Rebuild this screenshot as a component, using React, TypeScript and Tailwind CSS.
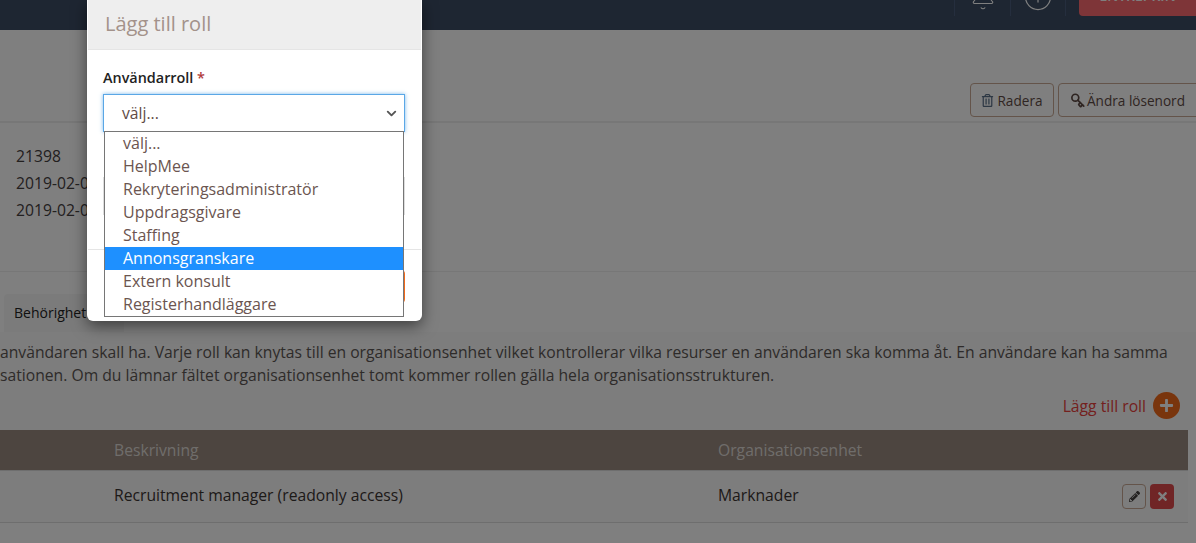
import { Bell, ChevronDown, Info, Key } from "lucide-react"
import { FaPencilAlt, FaPlus, FaRegTrashAlt, FaTimes } from "react-icons/fa"

const options = ["välj...", "HelpMee", "Rekryteringsadministratör", "Uppdragsgivare", "Staffing", "Annonsgranskare", "Extern konsult", "Registerhandläggare"]

const Page = () => {
  return (
    <div className="h-[543px] overflow-hidden bg-white text-[15.7px] leading-[23px] text-[#5f4b45]">
      <div className="h-[30px] bg-[#3c4c64] flex justify-end overflow-hidden">
        <div className="h-[16px] flex border-l border-[#4a5d7c]">
          <div className="w-[55px] flex justify-center items-end text-white">
            <Bell size={26} strokeWidth={1} className="shrink-0 mb-[5px]" />
          </div>
          <div className="w-[55px] flex justify-center items-end border-l border-[#4a5d7c] text-white">
            <Info size={30} strokeWidth={1} className="shrink-0 mb-[4px]" />
          </div>
          <div className="w-[14px] border-l border-[#4a5d7c]"></div>
          <div className="w-[117px] rounded-bl bg-[#fd6b70] text-white text-sm font-semibold flex items-end justify-center leading-[14px] pb-[13px]">ENTREPRIN</div>
        </div>
      </div>

      <div className="h-[93px] border-b-2 border-[#eeeeee] flex justify-end items-end pb-[4px] gap-1 -mr-3 text-[13.6px]">
        <button className="h-[34px] w-[84px] border border-[#c8a894] rounded flex items-center justify-center gap-[3px]"><FaRegTrashAlt size={13} className="text-[#5b7088]" />Radera</button>
        <button className="h-[34px] w-[150px] border border-[#c8a894] rounded flex items-center justify-start pl-[11px] gap-[2px]"><Key size={15} strokeWidth={2.75} className="rotate-90" />Ändra lösenord</button>
      </div>

      <div className="h-[149px] border-b border-[#eeeeee] pl-4 pt-[20px] leading-[27px] text-[#45403e]">
        <div>21398</div>
        <div>2019-02-01</div>
        <div>2019-02-01</div>
      </div>

      <div className="pt-[22px] px-1">
        <div className="h-[38px] w-[120px] bg-[#f7f7f7] pl-[10px] flex items-center text-sm text-[#222222] rounded-t">Behörighet</div>
      </div>

      <div className="bg-[#fafafa] pt-[9px] text-[#5d5754]">
        <p className="whitespace-nowrap">användaren skall ha. Varje roll kan knytas till en organisationsenhet vilket kontrollerar vilka resurser en användaren ska komma åt. En användare kan ha samma</p>
        <p className="whitespace-nowrap">sationen. Om du lämnar fältet organisationsenhet tomt kommer rollen gälla hela organisationsstrukturen.</p>
      </div>

      <div className="h-[43px] bg-[#fafafa] flex justify-end items-start pt-[5px] pr-[16px] gap-[7px]">
        <a className="text-[#e8413c] leading-[28px]">Lägg till roll</a>
        <span className="w-[27px] h-[27px] rounded-full bg-[#f26a1b] text-white flex items-center justify-center"><FaPlus size={15} /></span>
      </div>

      <div className="mr-2 bg-[#fafafa]">
        <div className="h-[41px] bg-[#9a8a80] border-b border-[#dddddd] grid grid-cols-[114px_604px_1fr] items-center text-white/70">
          <div></div>
          <div>Beskrivning</div>
          <div>Organisationsenhet</div>
        </div>
        <div className="h-[52px] border-b border-[#dddddd] grid grid-cols-[114px_604px_1fr] items-center text-[#3b3432]">
          <div></div>
          <div className="pb-[2px]">Recruitment manager (readonly access)</div>
          <div className="flex items-center justify-between pr-[14px]">
            <span className="pb-[2px]">Marknader</span>
            <span className="flex gap-1">
              <button className="w-6 h-[25px] border border-[#c8a894] rounded flex items-center justify-center text-[#45403e]"><FaPencilAlt size={11} /></button>
              <button className="w-6 h-[25px] rounded bg-[#e04a4d] flex items-center justify-center text-white"><FaTimes size={13} /></button>
            </span>
          </div>
        </div>
      </div>
    </div>
  )
}

const Modal = () => {
  return (
    <div className="absolute left-[87px] top-0 w-[335px] h-[321px] bg-white px-px rounded-b-md shadow-[0_5px_15px_rgba(0,0,0,0.5)] text-[15.7px]">
      <div className="h-[50px] bg-[#eeeeee] border-b border-[#e5e5e5] pl-[17px] pb-[2px] flex items-center text-[20px] text-[#a3928a]">Lägg till roll</div>
      <div className="pl-[15px] pr-[16px] pt-[16px] h-[199px]">
        <div className="font-semibold text-[14.4px] text-[#222222] leading-[24px]">Användarroll <span className="text-[#b03a3a]">*</span></div>
        <div className="relative mt-[4px] h-[38px] border border-[#5aa7e6] shadow-[0_0_4px_rgba(90,167,230,0.8)] pl-[18px] pt-px flex items-center justify-between pr-[5px]">
          <span className="text-[#5f4b45]">välj...</span>
          <ChevronDown size={15} strokeWidth={3} className="text-[#555555]" />
          <div className="absolute left-0 top-[36px] w-[300px] h-[186px] bg-white border border-[#767676] z-10 text-[16px]">
            {options.map((o) => (
              <div key={o} className={o === "Annonsgranskare" ? "h-[23px] pl-[18px] leading-[23px] bg-[#1e90ff] text-white" : "h-[23px] pl-[18px] leading-[23px] text-[#6b5550]"}>{o}</div>
            ))}
          </div>
        </div>
        <div className="mt-[45px] h-[38px] border border-[#dddddd]"></div>
      </div>
      <div className="border-t border-[#e5e5e5] pr-[16px] pt-[20px] flex justify-end">
        <div className="w-[120px] h-[33px] rounded bg-[#f26a1b]"></div>
      </div>
    </div>
  )
}

const App = () => {
  return (
    <div className="relative h-[543px] overflow-hidden" style={{ fontFamily: '"Open Sans", sans-serif' }}>
      <Page />
      <div className="absolute inset-0 bg-black/50"></div>
      <Modal />
    </div>
  )
}

export default App
